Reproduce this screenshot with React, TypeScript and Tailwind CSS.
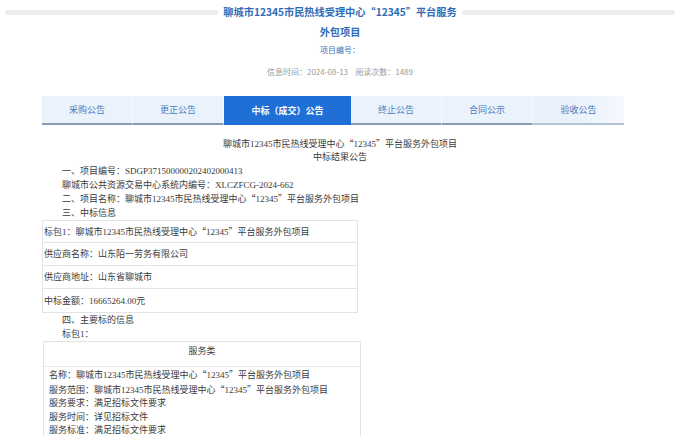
import React from "react";

const tabs = ["采购公告", "更正公告", "中标（成交）公告", "终止公告", "合同公示", "验收公告"];

function Q({ c }: { c: string }) {
  return <span className="font-['Noto_Sans_CJK_SC']">{c}</span>;
}

function Name() {
  return (
    <>
      聊城市12345市民热线受理中心<Q c="“" />12345<Q c="”" />平台服务外包项目
    </>
  );
}

export default function App() {
  return (
    <div className="w-[680px] h-[436px] overflow-hidden bg-white font-['Noto_Sans_CJK_SC','Noto_Sans',sans-serif]">
      {/* header */}
      <div className="pt-[2px]">
        <div className="flex items-center h-[20px] px-[5px]">
          <div className="flex-1 h-[5px] rounded-full bg-[#ececec]" />
          <div className="px-[5px] text-[10.2px] leading-[20px] font-semibold text-[#2f6bb7] whitespace-nowrap">
            聊城市12345市民热线受理中心“12345”平台服务
          </div>
          <div className="flex-1 h-[5px] rounded-full bg-[#ececec]" />
        </div>
        <div className="text-center text-[10.2px] leading-[20px] font-semibold text-[#2f6bb7]">外包项目</div>
        <div className="text-center text-[8px] leading-[16px] text-[#3f74b8]">项目编号：</div>
        <div className="mt-[6px] text-center text-[8px] leading-[16px] text-[#9a9a9a] whitespace-pre">
          信息时间：2024-08-13{"    "}阅读次数：1489
        </div>
      </div>

      {/* tabs */}
      <div className="mt-[16px] ml-[42px] w-[583px] flex h-[29px]">
        {tabs.map((t, i) =>
          i === 2 ? (
            <div key={t} className="w-[127px] flex items-center justify-center bg-[#1f6fd6] text-white text-[9px] font-semibold">
              {t}
            </div>
          ) : (
            <div
              key={t}
              className={`${i === 5 ? "w-[91px] bg-gradient-to-r from-[#eaf2fc] via-[#eaf2fc] to-[#f6f9fe] border-b-[#b5c2d2]" : "w-[91px] bg-[#eaf2fc] border-b-[#8a9db5] border-r border-r-[#f5f9fe]"} flex items-center justify-center text-[9px] text-[#4a7bbd] border-b-2`}
            >
              {t}
            </div>
          )
        )}
      </div>

      {/* content */}
      <div className="mt-[12px] text-[9px] text-[#3a3a3a] leading-[14px] font-['Liberation_Serif','Noto_Sans_CJK_SC',serif]">
        <div className="text-center">
          <Name />
        </div>
        <div className="text-center -mt-[1px]">中标结果公告</div>
        <div className="pl-[62px]">
          <div>一、项目编号：SDGP371500000202402000413</div>
          <div>聊城市公共资源交易中心系统内编号：XLCZFCG-2024-662</div>
          <div>
            二、项目名称：<Name />
          </div>
          <div>三、中标信息</div>
        </div>
        <div className="ml-[42px] w-[316px] border border-[#e3e3e3]">
          <div className="h-[22px] flex items-center pl-[1px] border-b border-[#e3e3e3]">
            <span>
              标包1：<Name />
            </span>
          </div>
          <div className="h-[23px] flex items-center pl-[1px] border-b border-[#e3e3e3]">供应商名称：山东陌一劳务有限公司</div>
          <div className="h-[23px] flex items-center pl-[1px] border-b border-[#e3e3e3]">供应商地址：山东省聊城市</div>
          <div className="h-[23px] flex items-center pl-[1px]">中标金额：16665264.00元</div>
        </div>
        <div className="pl-[62px]">
          <div>四、主要标的信息</div>
          <div>标包1：</div>
        </div>
        <div className="ml-[43px] w-[318px] border border-[#e3e3e3] border-b-0">
          <div className="h-[25px] text-center pt-[2px] border-b border-[#ececec]">服务类</div>
          <div className="pl-[5px] pt-[1px] leading-[13.5px]">
            <div>
              名称：<Name />
            </div>
            <div>
              服务范围：<Name />
            </div>
            <div>服务要求：满足招标文件要求</div>
            <div>服务时间：详见招标文件</div>
            <div>服务标准：满足招标文件要求</div>
          </div>
        </div>
      </div>
    </div>
  );
}
